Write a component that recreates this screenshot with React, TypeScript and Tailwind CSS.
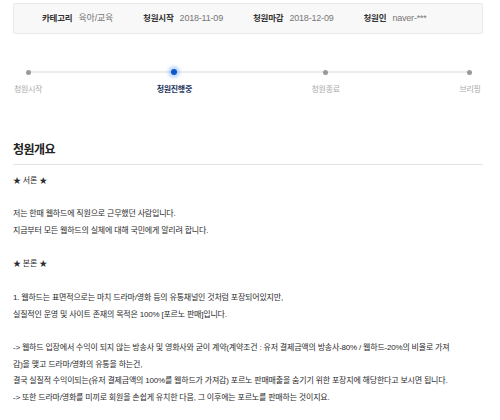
import React from "react";

const info = [
  { label: "카테고리", value: "육아/교육" },
  { label: "청원시작", value: "2018-11-09" },
  { label: "청원마감", value: "2018-12-09" },
  { label: "청원인", value: "naver-***" },
];

const steps = [
  { name: "청원시작", width: "w-[30px]" },
  { name: "청원진행중", width: "w-[40px]", active: true },
  { name: "청원종료", width: "w-[40px]" },
  { name: "브리핑", width: "w-[26px]" },
];

// null = blank line
const body: (string | null)[] = [
  "★ 서론 ★",
  null,
  "저는 한때 웹하드에 직원으로 근무했던 사람입니다.",
  "지금부터 모든 웹하드의 실체에 대해 국민에게 알리려 합니다.",
  null,
  "★ 본론 ★",
  null,
  "1. 웹하드는 표면적으로는 마치 드라마/영화 등의 유통채널인 것처럼 포장되어있지만,",
  "실질적인 운영 및 사이트 존재의 목적은 100% [포르노 판매]입니다.",
  null,
  "-> 웹하드 입장에서 수익이 되지 않는 방송사 및 영화사와 굳이 계약(계약조건 : 유저 결제금액의 방송사-80% / 웹하드-20%의 비율로 가져",
  "감)을 맺고 드라마/영화의 유통을 하는건,",
  "결국 실질적 수익이되는(유저 결제금액의 100%를 웹하드가 가져감) 포르노 판매매출을 숨기기 위한 포장지에 해당한다고 보시면 됩니다.",
  "-> 또한 드라마/영화를 미끼로 회원을 손쉽게 유치한 다음, 그 이후에는 포르노를 판매하는 것이지요.",
];

export default function App() {
  return (
    <div className="w-[500px] h-[420px] overflow-hidden bg-white pl-[13px] pr-[17px] pt-[3px] font-['Liberation_Sans','Noto_Sans_CJK_KR',sans-serif] text-[#333]">
      {/* info box */}
      <div className="h-[31px] flex items-center gap-[30px] pl-[28px] bg-[#f8f8f8] border border-[#e9e9e9] rounded-[2px]">
        {info.map((i) => (
          <div key={i.label} className="flex items-center whitespace-nowrap">
            <span className="font-bold text-[8.5px] text-[#333] tracking-[-0.2px]">{i.label}</span>
            <span className="ml-[6px] text-[9px] text-[#777] tracking-[-0.2px]">{i.value}</span>
          </div>
        ))}
      </div>

      {/* progress steps */}
      <div className="relative mt-[33px] flex justify-between">
        <div className="absolute top-[4px] left-[15px] right-[13px] h-[2px] bg-[#ececec]" />
        {steps.map((s) => (
          <div key={s.name} className={`${s.width} relative flex flex-col items-center`}>
            <div className="h-[10px] flex items-center justify-center">
              {s.active ? (
                <div className="w-[6px] h-[6px] rounded-full bg-[#0d58c9] shadow-[0_0_3px_3px_rgba(80,150,245,0.35)]" />
              ) : (
                <div className="w-[5px] h-[5px] rounded-full bg-[#999]" />
              )}
            </div>
            <div
              className={
                s.active
                  ? "mt-[8px] text-[8px] leading-[10px] font-bold text-[#1e3560] whitespace-nowrap tracking-[-0.3px]"
                  : "mt-[8px] text-[8px] leading-[10px] text-[#aaa] whitespace-nowrap tracking-[-0.3px]"
              }
            >
              {s.name}
            </div>
          </div>
        ))}
      </div>

      {/* content */}
      <h2 className="mt-[47px] text-[12px] leading-[16px] font-bold text-[#222] tracking-[-0.5px] pb-[6px] border-b border-[#e3e3e3]">
        청원개요
      </h2>
      <div className="pt-[8px] text-[8px] leading-[16.7px] tracking-[-0.2px] text-[#2a2a2a]">
        {body.map((line, idx) =>
          line === null ? (
            <div key={idx} className="h-[16.7px]" />
          ) : (
            <div key={idx} className="whitespace-nowrap">
              {line}
            </div>
          )
        )}
      </div>
    </div>
  );
}
